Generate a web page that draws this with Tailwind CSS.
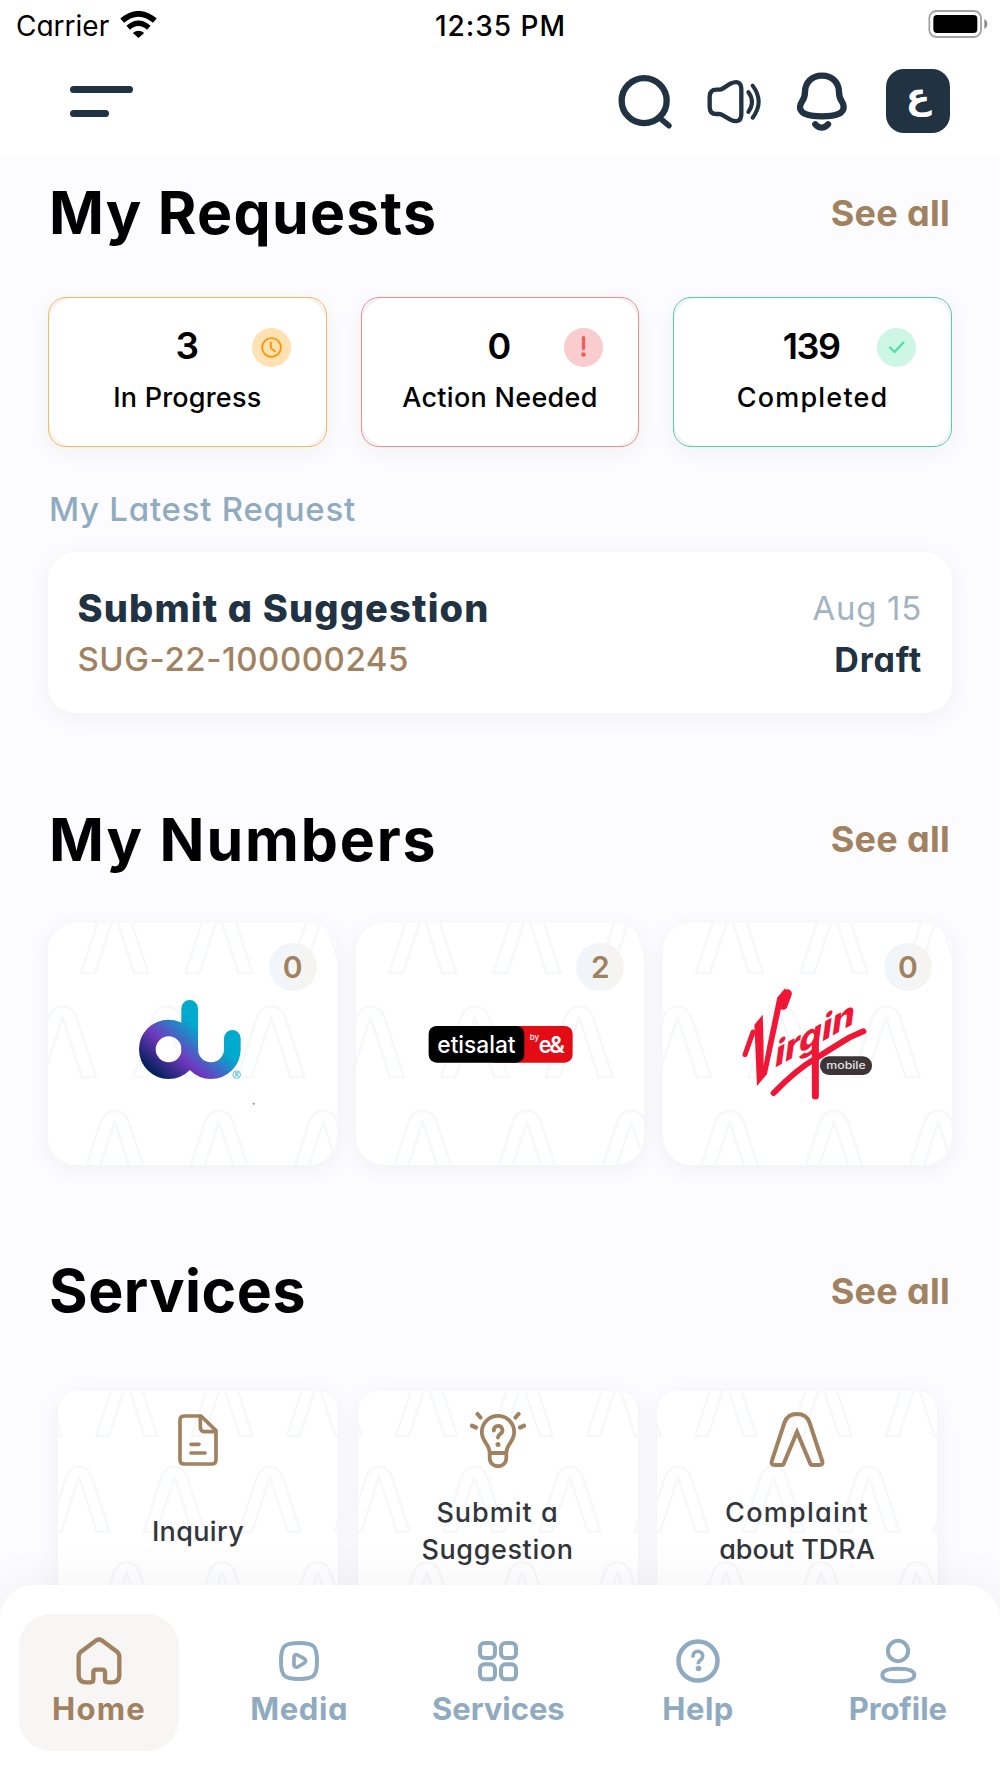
<!DOCTYPE html>
<html lang="en">
<head>
<meta charset="utf-8">
<meta name="viewport" content="width=device-width, initial-scale=1">
<title>Home</title>
<script src="https://cdn.jsdelivr.net/npm/@tailwindcss/browser@4"></script>
</head>
<body class="h-[1778px] w-[1000px] overflow-hidden bg-[#fcfcfe] font-['Inter',sans-serif] text-black [font-feature-settings:'cv11'_1]">

<!-- shared watermark patterns -->
<svg class="absolute h-0 w-0" aria-hidden="true">
  <defs>
    <g id="arch" fill="none" stroke="#f5f7f9" stroke-width="2.4" stroke-linejoin="round">
      <path d="M-33.5 71 L-14 11 Q-9.500 0 0 0 Q9.500 0 14 11 L33.500 71 H19.500 L0 11 L-19.500 71 Z"/>
    </g>
    <pattern id="archLarge" width="104.3" height="208.6" patternUnits="userSpaceOnUse" patternTransform="translate(14.5 -31)">
      <use href="#arch" x="52.15" y="10"/><use href="#arch" x="0" y="114.3"/><use href="#arch" x="104.3" y="114.3"/>
    </pattern>
    <pattern id="archSmall" width="104.3" height="208.6" patternUnits="userSpaceOnUse" patternTransform="translate(21 -28.8) scale(.915)">
      <use href="#arch" x="52.15" y="10"/><use href="#arch" x="0" y="114.3"/><use href="#arch" x="104.3" y="114.3"/>
    </pattern>
  </defs>
</svg>

<div class="flex h-full flex-col">
  <header class="h-[157px] shrink-0 bg-white">
    <div class="grid h-[52px] grid-cols-3 items-center pr-[12px] pl-4 text-[28px] leading-none">
      <div class="flex items-center gap-[11px]">
        <span>Carrier</span>
        <svg class="mb-[4px] h-[27px] w-[37px]" viewBox="361 30 110 81" fill="none" stroke="#000" stroke-width="17">
          <path d="M367 59 Q416 18 465 59"/><path d="M385 80 Q416 53 447 80" stroke-width="16"/>
          <path d="M399 96 Q416 82 433 96 L416 111 Z" fill="#000" stroke="none"/>
        </svg>
      </div>
      <div class="pr-[3px] text-center font-medium tracking-[1px]">12:35 PM</div>
      <svg class="mb-[4px] h-[28px] w-[60px] justify-self-end" viewBox="1283 30 180 84">
        <rect x="1287" y="33" width="155" height="78" rx="21" fill="none" stroke="#a3a3a3" stroke-width="5.500"/>
        <rect x="1299" y="45" width="132" height="54" rx="11"/>
        <path d="M1452 57 Q1461 62 1461 72 Q1461 82 1452 87 Z" fill="#8e8e8e"/>
      </svg>
    </div>
    <div class="flex items-center justify-between pt-[17px] pr-[50px] pl-[70px]">
      <div class="flex flex-col gap-[17px]">
        <div class="h-[7px] w-[63px] rounded-full bg-[#213242]"></div>
        <div class="h-[7px] w-[39px] rounded-full bg-[#213242]"></div>
      </div>
      <div class="flex text-[#213242]">
        <svg class="size-16" viewBox="339.5 206 192 192" fill="none" stroke="currentColor" stroke-width="19">
          <circle cx="433" cy="301" r="67.500"/><path d="M482 355 L507 376" stroke-width="17" stroke-linecap="round"/>
        </svg>
        <svg class="ml-[25px] size-16" viewBox="607 206 192 192" fill="none" stroke="currentColor" stroke-width="13" stroke-linecap="round" stroke-linejoin="round">
          <path d="M630 290 Q630 268 650 268 H658 Q664 268 670 264 L692 250 Q724 236 725 266 V342 Q724 372 692 358 L670 345 Q664 341 658 341 H650 Q630 341 630 319 Z"/>
          <path d="M746 275 Q768 305 746 335" stroke-width="12"/><path d="M759 256 Q795 305 759 352" stroke-width="12"/>
        </svg>
        <svg class="ml-[24px] size-16" viewBox="871 206 192 192" fill="none" stroke="currentColor" stroke-width="19" stroke-linecap="round">
          <path d="M967 226 C935 226 916 248 916 275 C916 303 901 302 901 320 C901 342 930 348 967 348 C1004 348 1032 342 1032 320 C1032 302 1018 303 1018 275 C1018 248 999 226 967 226 Z"/>
          <path d="M947 372 Q966 392 985 372"/>
        </svg>
        <div class="ml-[32px] flex size-16 items-center justify-center rounded-[18px] bg-[#213242] pb-[10px] font-['DejaVu_Sans',sans-serif] text-[36px] leading-none font-bold text-white">ع</div>
      </div>
    </div>
  </header>

  <main class="h-[1428px] shrink-0 overflow-hidden">
    <!-- requests -->
    <section class="px-12">
      <div class="flex h-[111px] items-center justify-between pr-[2px]">
        <h2 class="pl-px text-[59px] leading-none font-bold tracking-[1.25px]">My Requests</h2>
        <a class="text-[36px] leading-none font-bold tracking-[.3px] text-[#a08260]">See all</a>
      </div>
      <div class="mt-[29px] grid grid-cols-3 gap-[34px]">
        <div class="relative h-[150px] rounded-[18px] border border-[#fbb957] bg-[#f5f5f7] shadow-[0_5px_20px_rgba(20,30,60,0.05)]">
          <div class="flex h-full flex-col items-center rounded-[26px] bg-white pt-[25px]">
            <div class="h-[46px] text-[37px] leading-[46px] font-semibold">3</div>
            <div class="mt-[10px] text-[27px] leading-[37px] font-medium tracking-[.2px]">In Progress</div>
          </div>
          <svg class="absolute top-[30px] right-[35px] size-[39px]" viewBox="0 0 39 39" fill="none" stroke="#ff9500" stroke-width="1.900" stroke-linecap="round">
            <circle cx="19.500" cy="19.500" r="19.500" fill="#ffe1b3" stroke="none"/><circle cx="19.500" cy="19.500" r="9.400"/><path d="M18.800 14.500 V19 Q18.800 20.500 20 21.200 L23 23.200"/>
          </svg>
        </div>
        <div class="relative h-[150px] rounded-[18px] border border-[#f38d8d] bg-[#f5f5f7] shadow-[0_5px_20px_rgba(20,30,60,0.05)]">
          <div class="flex h-full flex-col items-center rounded-[26px] bg-white pt-[25px]">
            <div class="h-[46px] pr-[2px] text-[36px] leading-[46px] font-semibold tracking-[-1px]">0</div>
            <div class="mt-[10px] text-[27px] leading-[37px] font-medium tracking-[.3px]">Action Needed</div>
          </div>
          <svg class="absolute top-[30px] right-[35px] size-[39px]" viewBox="0 0 39 39" fill="none" stroke="#ee5f5b" stroke-linecap="round">
            <circle cx="19.500" cy="19.500" r="19.500" fill="#f9cdcd" stroke="none"/><path d="M19.500 9.800 V20.500" stroke-width="3.400"/><circle cx="19.500" cy="26.500" r="2.300" fill="#ee5f5b" stroke="none"/>
          </svg>
        </div>
        <div class="relative h-[150px] rounded-[18px] border border-[#58cfa9] bg-[#f5f5f7] shadow-[0_5px_20px_rgba(20,30,60,0.05)]">
          <div class="flex h-full flex-col items-center rounded-[26px] bg-white pt-[25px]">
            <div class="h-[46px] pr-[3px] text-[36px] leading-[46px] font-semibold tracking-[-1.5px]">139</div>
            <div class="mt-[10px] text-[27px] leading-[37px] font-medium tracking-[1.2px]">Completed</div>
          </div>
          <svg class="absolute top-[30px] right-[35px] size-[39px]" viewBox="0 0 39 39" fill="none" stroke="#46dfae" stroke-width="2.200" stroke-linecap="round" stroke-linejoin="round">
            <circle cx="19.500" cy="19.500" r="19.500" fill="#cdf6e7" stroke="none"/><path d="M13 19.500 L17.500 24 L26.500 14.500"/>
          </svg>
        </div>
      </div>

      <h3 class="mt-[38px] pl-px text-[33px] leading-[48px] font-[450] tracking-[.75px] text-[#90abbf]">My Latest Request</h3>
      <div class="mt-[19px] h-[161px] rounded-[28px] bg-white pt-[31px] pr-[30px] pl-[29.5px] shadow-[0_4px_22px_rgba(20,30,60,0.05)]">
        <div class="flex items-center justify-between leading-[51px]">
          <span class="text-[38px] font-extrabold tracking-[1.15px] text-[#213242]">Submit a Suggestion</span>
          <span class="text-[33px] tracking-[.7px] text-[#a3b3c0]">Aug 15</span>
        </div>
        <div class="flex items-center justify-between leading-[51px]">
          <span class="text-[33px] font-[450] tracking-[.55px] text-[#a08260]">SUG-22-100000245</span>
          <span class="text-[34px] font-bold tracking-[.8px] text-[#213242]">Draft</span>
        </div>
      </div>
    </section>

    <!-- numbers -->
    <section class="mt-[70.5px] px-12">
      <div class="flex h-[111px] items-center justify-between pr-[2px]">
        <h2 class="pl-px text-[59px] leading-none font-bold tracking-[1.85px]">My Numbers</h2>
        <a class="text-[36px] leading-none font-bold tracking-[.3px] text-[#a08260]">See all</a>
      </div>
      <div class="mt-[28.5px] grid grid-cols-3 gap-[19px]">
        <div class="relative h-[242px] overflow-hidden rounded-[28px] bg-white shadow-[0_4px_22px_rgba(20,30,60,0.05)]">
          <svg class="h-full w-full" viewBox="0 0 288.67 242">
            <defs>
              <linearGradient id="duGrad" gradientUnits="userSpaceOnUse" x1="355" y1="505" x2="483" y2="355">
                <stop offset="0" stop-color="#05205c"/><stop offset=".46" stop-color="#7139bf"/><stop offset=".95" stop-color="#00a9ce"/>
              </linearGradient>
            </defs>
            <rect width="289" height="242" fill="url(#archLarge)"/>
            <g transform="translate(-18 -23) scale(.33333)">
              <g fill="none" stroke="url(#duGrad)" stroke-width="50" stroke-linecap="round">
                <circle cx="416" cy="448" r="64"/><path d="M479 325 V448 A64 64 0 0 0 607 448 V415"/>
              </g>
              <circle cx="620" cy="524" r="11.500" fill="none" stroke="#5dbfd3" stroke-width="3"/>
              <text x="620" y="531" text-anchor="middle" font-size="18" font-weight="700" fill="#5dbfd3">R</text>
              <circle cx="671" cy="611" r="3" fill="#6f86d6"/>
            </g>
          </svg>
          <span class="absolute top-5 right-5 flex size-12 items-center justify-center rounded-full bg-linear-to-r from-[#eff6fd] to-[#f7f4ef] text-[30px] leading-none font-semibold text-[#a08260]">0</span>
        </div>
        <div class="relative h-[242px] overflow-hidden rounded-[28px] bg-white shadow-[0_4px_22px_rgba(20,30,60,0.05)]">
          <svg class="h-full w-full" viewBox="0 0 288.67 242">
            <rect width="289" height="242" fill="url(#archLarge)"/>
            <g transform="translate(-15.700 -23) scale(.33333)">
              <rect x="440" y="378" width="257" height="110" rx="24" fill="#e30b14"/>
              <rect x="265" y="378" width="287" height="110" rx="24"/>
              <text class="[font-feature-settings:normal]" x="291" y="458" font-size="72" font-weight="500" textLength="235" lengthAdjust="spacingAndGlyphs" fill="#fff">etisalat</text>
              <text x="568" y="419" font-size="24" font-weight="500" textLength="28" lengthAdjust="spacingAndGlyphs" fill="#fff">by</text>
              <text x="595" y="458" font-size="70" font-weight="600" textLength="38" lengthAdjust="spacingAndGlyphs" fill="#fff">e</text>
              <text x="627" y="458" font-size="70" font-weight="600" textLength="47" lengthAdjust="spacingAndGlyphs" fill="#fff">&amp;</text>
            </g>
          </svg>
          <span class="absolute top-5 right-5 flex size-12 items-center justify-center rounded-full bg-linear-to-r from-[#eff6fd] to-[#f7f4ef] text-[30px] leading-none font-semibold text-[#a08260]">2</span>
        </div>
        <div class="relative h-[242px] overflow-hidden rounded-[28px] bg-white shadow-[0_4px_22px_rgba(20,30,60,0.05)]">
          <svg class="h-full w-full" viewBox="0 0 288.67 242">
            <rect width="289" height="242" fill="url(#archLarge)"/>
            <g transform="translate(-13.300 -23) scale(.33333)">
              <g fill="#ef1636">
                <text transform="matrix(1.380 -1.640 -.337 3.060 287 600)" font-size="100" font-weight="800" textLength="72" lengthAdjust="spacingAndGlyphs">V</text>
                <text transform="matrix(.81 -.45 -.12 .88 372 505)" font-size="125" font-weight="800" textLength="296" lengthAdjust="spacingAndGlyphs">irgin</text>
              </g>
              <g fill="none" stroke="#ef1636" stroke-linecap="round">
                <path d="M286 464 L310 396" stroke-width="15"/>
                <path d="M413 281 L400 316" stroke-width="27"/>
                <path d="M372 579 Q440 508 500 474 Q560 436 600 412 L641 394" stroke-width="18"/>
                <path d="M497 430 L497 588" stroke-width="21"/>
              </g>
              <rect x="511" y="469" width="156" height="56" rx="27" fill="#3b3537"/>
              <text x="530" y="507" font-size="33" font-weight="500" textLength="118" lengthAdjust="spacingAndGlyphs" fill="#e5e2e2">mobile</text>
            </g>
          </svg>
          <span class="absolute top-5 right-5 flex size-12 items-center justify-center rounded-full bg-linear-to-r from-[#eff6fd] to-[#f7f4ef] text-[30px] leading-none font-semibold text-[#a08260]">0</span>
        </div>
      </div>
    </section>

    <!-- services -->
    <section class="mt-[70px]">
      <div class="flex h-[111px] items-center justify-between pr-[50px] pl-12">
        <h2 class="pl-px text-[59px] leading-none font-bold tracking-[.5px]">Services</h2>
        <a class="text-[36px] leading-none font-bold tracking-[.3px] text-[#a08260]">See all</a>
      </div>
      <div class="mt-[45px] flex gap-[19.5px] pl-[58px] text-center text-[27px] leading-[37px] font-medium text-[#32363b]">
        <div class="relative h-[240px] w-[280px] overflow-hidden rounded-[20px] bg-white shadow-[0_4px_22px_rgba(20,30,60,0.05)]">
          <svg class="absolute inset-0 h-full w-full"><rect width="280" height="240" fill="url(#archSmall)"/></svg>
          <div class="relative flex flex-col items-center pt-[17px]">
            <svg class="size-16" viewBox="408 114 192 192" fill="none" stroke="#a08260" stroke-width="11" stroke-linecap="round" stroke-linejoin="round">
              <path d="M513 138 H463 Q450 138 450 151 V269 Q450 282 463 282 H545 Q558 282 558 269 V182 Z"/><path d="M511 140 V170 Q511 185 526 185 H556"/><path d="M483 223 H507 M483 249 H525"/>
            </svg>
            <div class="flex h-[118px] items-center tracking-[.35px]">Inquiry</div>
          </div>
        </div>
        <div class="relative h-[240px] w-[280px] overflow-hidden rounded-[20px] bg-white shadow-[0_4px_22px_rgba(20,30,60,0.05)]">
          <svg class="absolute inset-0 h-full w-full"><rect width="280" height="240" fill="url(#archSmall)"/></svg>
          <div class="relative flex flex-col items-center pt-[17px]">
            <svg class="size-16" viewBox="0 0 64 64" fill="none" stroke="#a08260" stroke-width="3.800" stroke-linecap="round" stroke-linejoin="round">
              <path d="M23.700 45 C23.700 36 15.800 34 15.800 24 A16.200 16.200 0 0 1 48.200 24 C48.200 34 40.300 36 40.300 45 Z"/>
              <path d="M23.700 45 V50 C23.700 61 40.300 61 40.300 50 V45"/>
              <path d="M11.500 6 L14.500 9.500 M6 17.800 L10 19.500 M52.500 6 L49.500 9.500 M58 17.800 L54 19.500" stroke-width="4.200"/>
              <path d="M27.800 22.500 A4.300 4.300 0 1 1 34.200 26 Q32.300 27 32 29.500" stroke-width="3.800"/>
              <circle cx="32" cy="36.500" r="2.500" fill="#a08260" stroke="none"/>
            </svg>
            <div class="flex h-[118px] flex-col justify-center"><span class="tracking-[1px]">Submit a</span><span class="tracking-[.6px]">Suggestion</span></div>
          </div>
        </div>
        <div class="relative h-[240px] w-[280px] overflow-hidden rounded-[20px] bg-white shadow-[0_4px_22px_rgba(20,30,60,0.05)]">
          <svg class="absolute inset-0 h-full w-full"><rect width="280" height="240" fill="url(#archSmall)"/></svg>
          <div class="relative flex flex-col items-center pt-[17px]">
            <svg class="size-16" viewBox="0 0 64 64" fill="none" stroke="#a08260" stroke-width="4">
              <path d="M10 57 Q5.500 57 6.800 53 L19.500 14.500 Q22.500 6 32 6 Q41.500 6 44.500 14.500 L57.200 53 Q58.500 57 54 57 H47.500 Q45.500 57 45 55 L32 24 L19 55 Q18.500 57 16.500 57 Z"/>
            </svg>
            <div class="flex h-[118px] flex-col justify-center"><span class="tracking-[1.25px]">Complaint</span><span class="tracking-[-.05px]">about TDRA</span></div>
          </div>
        </div>
      </div>
    </section>
  </main>

  <nav class="relative flex h-[193px] shrink-0 gap-[39.7px] rounded-t-[34px] bg-white pt-[29px] pl-[19px] text-[31px] leading-[36px] font-bold text-[#90abbf] shadow-[0_0_50px_rgba(20,30,60,0.06)]">
    <a class="flex h-[137px] w-[160px] flex-col items-center gap-[6px] rounded-[32px] bg-[#f7f6f5] pt-[22.5px] text-[#a08260]">
      <svg class="size-12" viewBox="227 169 144 144" fill="none" stroke="currentColor" stroke-width="13" stroke-linejoin="round">
        <path d="M291 179 Q299 174 307 179 L353 213 Q360 219 360 227 V283 Q360 305 338 305 H326 Q317 305 317 296 V275 Q317 267 309 267 H290 Q282 267 282 275 V296 Q282 305 273 305 H260 Q238 305 238 283 V227 Q238 219 245 213 Z"/>
      </svg>
      <span class="tracking-[1.3px]">Home</span>
    </a>
    <a class="flex h-[137px] w-[160px] flex-col items-center gap-[6px] pt-[22.5px]">
      <svg class="size-12" viewBox="829 169 144 144" fill="none" stroke="currentColor" stroke-width="12" stroke-linejoin="round">
        <path d="M901 187 C946 187 955 196 955 241 C955 286 946 295 901 295 C856 295 847 286 847 241 C847 196 856 187 901 187 Z"/>
        <path d="M886 229 Q887 219 897 223 L917 234 Q925 240 917 247 L897 259 Q888 262 886 253 Z" stroke-width="11"/>
      </svg>
      <span class="pl-px tracking-[.6px]">Media</span>
    </a>
    <a class="flex h-[137px] w-[160px] flex-col items-center gap-[6px] pt-[22.5px]">
      <svg class="size-12" viewBox="0 0 48 48" fill="none" stroke="currentColor" stroke-width="4">
        <rect x="6" y="6" width="15" height="15" rx="4.500"/><rect x="27" y="6" width="15" height="15" rx="4.500"/><rect x="6" y="27.300" width="15" height="15" rx="4.500"/><rect x="27" y="27.300" width="15" height="15" rx="4.500"/>
      </svg>
      <span class="tracking-[-.05px]">Services</span>
    </a>
    <a class="flex h-[137px] w-[160px] flex-col items-center gap-[6px] pt-[22.5px]">
      <svg class="size-12" viewBox="0 0 48 48" fill="none" stroke="currentColor" stroke-width="4.500">
        <circle cx="24" cy="24" r="19.500"/>
        <path d="M19.300 20.500 A4.800 4.800 0 1 1 26.500 23 Q24.300 24.300 24.300 27.200" stroke-width="3.600"/><circle cx="24.500" cy="31.500" r="2.800" fill="currentColor" stroke="none"/>
      </svg>
      <span class="tracking-[.5px]">Help</span>
    </a>
    <a class="flex h-[137px] w-[160px] flex-col items-center gap-[6px] pt-[22.5px]">
      <svg class="size-12" viewBox="1124 169 144 144" fill="none" stroke="currentColor" stroke-width="12">
        <circle cx="1196" cy="211" r="30.500"/><path d="M1196 264 C1230 264 1245 271 1245 283 C1245 296 1230 302 1196 302 C1162 302 1149 296 1149 283 C1149 271 1162 264 1196 264 Z"/>
      </svg>
      <span class="tracking-[-.1px]">Profile</span>
    </a>
  </nav>
</div>
</body>
</html>
